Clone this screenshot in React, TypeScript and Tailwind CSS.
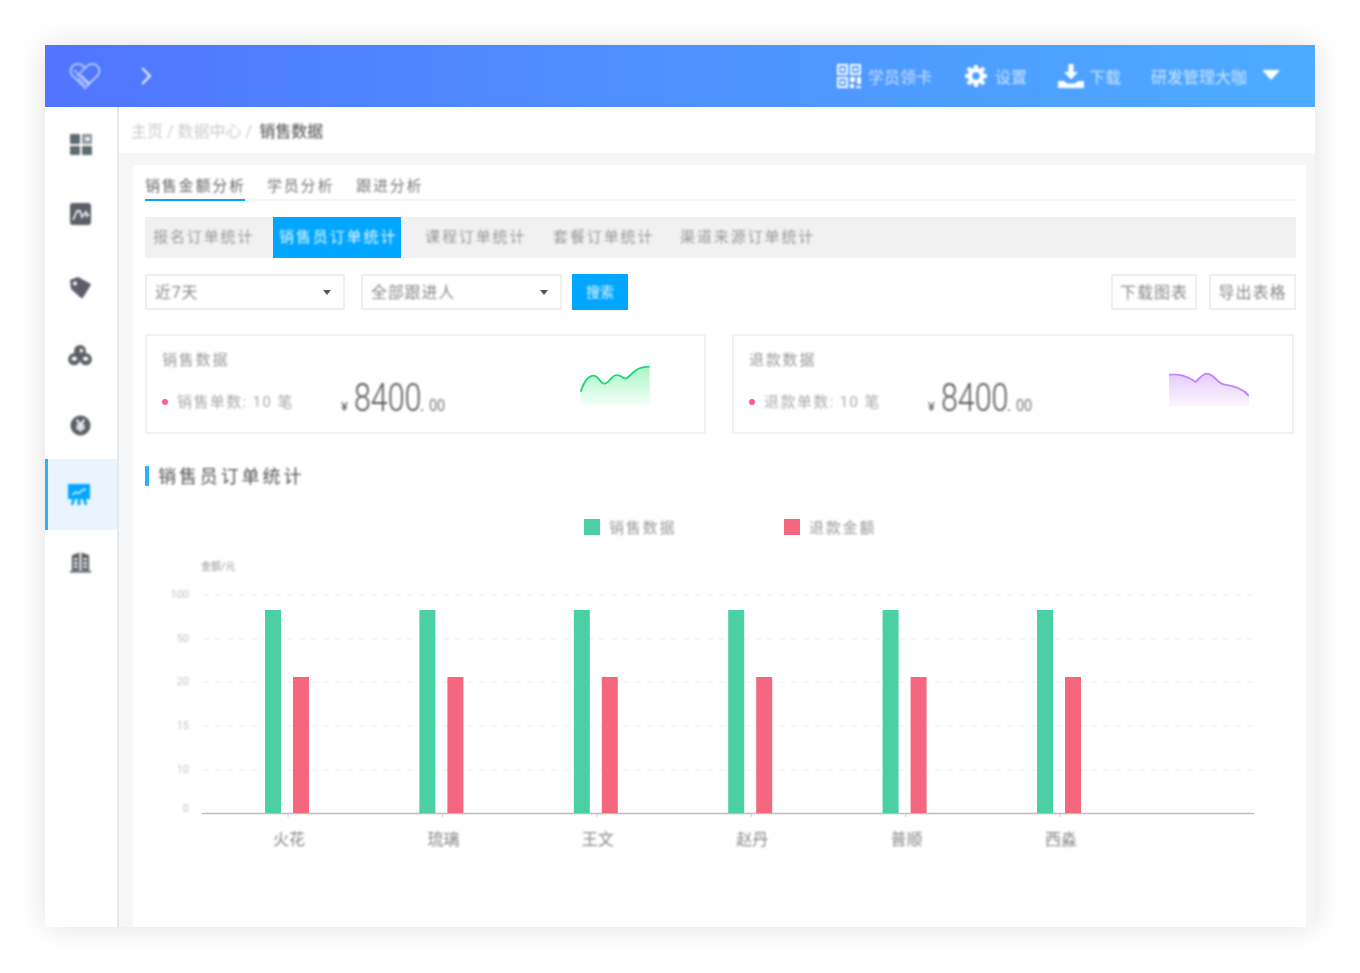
const names = ["火花", "琉璃", "王文", "赵丹", "普顺", "西淼"];
const gridRows = [
  { y: 595, label: "100" },
  { y: 639, label: "50" },
  { y: 682, label: "20" },
  { y: 726, label: "15" },
  { y: 770, label: "10" },
];

// text and icons in the reference are soft, boxes and bars are not
function Soft({ children }: { children: React.ReactNode }) {
  return <span className="inline-block blur-[0.8px]">{children}</span>;
}

function Logo() {
  return (
    <svg width="32" height="28" viewBox="0 0 32 28" fill="none" stroke="#fff" strokeOpacity="0.7" strokeWidth="1.6">
      <path d="M16 26 3 13C-.5 8.500 3 2 8.500 2c3 0 5.500 1.500 7.500 4 2-2.500 4.500-4 7.500-4C29 2 32.500 8.500 29 13Z" />
      <path d="M5 8l14 14M9 16l7 7M12 13l8 8M16 6 8 14" strokeWidth="1.200" />
    </svg>
  );
}

function QrIcon() {
  return (
    <svg width="24" height="24" viewBox="0 0 24 24" fill="#fff">
      <path fillRule="evenodd" d="M0 0h11v11H0Zm2 2v7h7V2Zm1.500 2h4v3h-4ZM13 0h11v11H13Zm2 2v7h7V2Zm1.500 2h4v3h-4ZM0 13h11v11H0Zm2 2v7h7v-7Zm1.500 2h4v3h-4Z" />
      <path d="M13 13h5v5h-5Zm7 0h4v7h-4Zm-7 7h4v4h-4Zm6 2h5v2h-5Z" />
    </svg>
  );
}

function GearIcon() {
  return (
    <svg width="24" height="24" viewBox="0 0 24 24" fill="none" stroke="#fff">
      <circle cx="12" cy="12" r="6" strokeWidth="4.500" />
      <path d="M12 1v4M12 19v4M1 12h4M19 12h4M4 4l3 3M17 17l3 3M20 4l-3 3M7 17l-3 3" strokeWidth="4" />
    </svg>
  );
}

function DownloadIcon() {
  return (
    <svg width="26" height="24" viewBox="0 0 26 24" fill="#fff">
      <path d="M10.500 0h5v8H20l-7 7.500L6 8h4.500Z" />
      <path d="M0 17h6l3 2.500h8l3-2.500h6v7H0Z" />
    </svg>
  );
}

function DashIcon() {
  return (
    <svg className="block" width="22" height="21" viewBox="0 0 22 21">
      <rect width="10" height="10" rx="1" fill="#5f6b73" />
      <rect x="12" width="10" height="10" rx="1" fill="#8e979d" />
      <rect x="15" y="3" width="5" height="4" fill="#e6e8ea" />
      <rect y="12" width="10" height="9" rx="1" fill="#5f6b73" />
      <rect x="12" y="12" width="10" height="9" rx="1" fill="#5f6b73" />
    </svg>
  );
}

function ChartSquareIcon() {
  return (
    <svg className="block" width="21" height="22" viewBox="0 0 21 22">
      <rect width="21" height="22" rx="3" fill="#5a5e66" />
      <path d="M3 17l4-9 3 0 2 6 4-5 1 4 2-2" fill="none" stroke="#f0f0f0" strokeWidth="1.800" />
    </svg>
  );
}

function TagIcon() {
  return (
    <svg className="block" width="22" height="22" viewBox="0 0 22 22" fill="#5a5e66">
      <path fillRule="evenodd" d="M0 3 8 0l12 6.500a1.500 1.500 0 0 1 .5 2L13 20.500a1.500 1.500 0 0 1-2 .5L1 12ZM5 4.500a2 2 0 1 0 .1 0Z" />
    </svg>
  );
}

function CoinsIcon() {
  return (
    <svg className="block" width="24" height="22" viewBox="0 0 24 22" fill="#5a5e66">
      <path fillRule="evenodd" d="M12 0a6 6 0 0 1 5.500 8.300A6 6 0 1 1 12 15.500a6 6 0 1 1-5.500-7.200A6 6 0 0 1 12 0Zm0 3.500v4.500l3.500-1.500a3.800 3.800 0 0 0-3.500-3Zm-5.500 8a3.500 3.500 0 0 0-3 3.500l4 1 2-3Zm11 0-3 1.500 2 3 4-1a3.500 3.500 0 0 0-3-3.500Z" />
    </svg>
  );
}

function YenIcon() {
  return (
    <svg className="block" width="21" height="21" viewBox="0 0 22 22">
      <circle cx="11" cy="11" r="10.500" fill="#5a5e66" />
      <path d="M7 5l4 5 4-5M6.500 11h9M6.500 14h9M11 10v7.500" fill="none" stroke="#f4f4f4" strokeWidth="2.200" />
    </svg>
  );
}

function BoardIcon() {
  return (
    <svg className="block" width="22" height="21" viewBox="0 0 22 21">
      <path d="M0 0h22v15H0Z" fill="#00a6ff" />
      <path d="M4 11l4-3 2 1.500L16 5l2 1" fill="none" stroke="#d8f0ff" strokeWidth="1.500" />
      <path d="M4 15h3l-1.500 6H3ZM9.500 15h3v6h-3ZM15 15h3l1 6h-2.500Z" fill="#00a6ff" />
    </svg>
  );
}

function BuildingIcon() {
  return (
    <svg className="block" width="21" height="21" viewBox="0 0 22 21" fill="#5a5e66">
      <path fillRule="evenodd" d="M2 3 10 0v19H2ZM4 6v2h4V6Zm0 4v2h4v-2Zm0 4v2h4v-2ZM12 0l8 3v16h-8Zm2 6v2h4V6Zm0 4v2h4v-2Zm0 4v2h4v-2Z" />
      <rect y="19" width="22" height="2" />
    </svg>
  );
}

function Caret() {
  return <span className="h-0 w-0 border-x-[4.500px] border-t-[5px] border-x-transparent border-t-[#555]" />;
}

function StatCard({ title, label, children, className }: { title: string; label: string; children: React.ReactNode; className: string }) {
  return (
    <div className={`flex h-[100px] justify-between border-2 border-[#f2f2f3] ${className}`}>
      <div className="pl-[15px] pt-[14px]">
        <div className="text-[15px] leading-[20px] tracking-[1.8px] text-[#999]"><Soft>{title}</Soft></div>
        <div className="mt-[14px] flex h-[36px] items-center">
          <span className="h-[6px] w-[6px] rounded-full bg-[#ff5a9e]" />
          <span className="ml-[9px] w-[164px] whitespace-nowrap text-[15px] leading-[20px] tracking-[1.4px] text-[#aaa]"><Soft>{label}</Soft></span>
          <span className="-mt-[6px] flex items-baseline text-[#555] blur-[0.8px]">
            <span className="w-[13px] text-[13px]">¥</span>
            <span className="inline-block w-[66px] origin-left scale-x-[0.8] text-[38px] leading-[36px] font-light">8400</span>
            <span className="w-[9px] text-[16px]">.</span>
            <span className="inline-block w-[18px] origin-left scale-x-[0.9] text-[16px] text-[#777]">00</span>
          </span>
        </div>
      </div>
      {children}
    </div>
  );
}

export default function App() {
  return (
    <div className="h-[973px] w-[1360px] overflow-hidden bg-white pl-[45px] pt-[45px] font-['Roboto','Noto_Sans_CJK_SC',sans-serif]">
      <div className="flex h-[882px] w-[1270px] flex-col shadow-[0_0_30px_rgba(0,0,0,0.12)]">
        {/* HEADER */}
        <header className="flex h-[62px] shrink-0 items-center bg-gradient-to-r from-[#5075ff] to-[#4dacff] pr-[35px]">
          <div className="ml-[24px] flex items-center blur-[0.8px]">
            <Logo />
            <svg className="ml-[39px]" width="12" height="18" viewBox="0 0 12 18" fill="none" stroke="#fff" strokeOpacity="0.9" strokeWidth="2">
              <path d="M2 1l8 8-8 8" />
            </svg>
          </div>
          <div className="ml-auto flex items-center text-[16px] leading-[24px] text-white/70 blur-[0.8px]">
            <QrIcon />
            <span className="ml-[7px] mt-[3px]">学员领卡</span>
            <span className="ml-[32px]">
              <GearIcon />
            </span>
            <span className="ml-[7px] mt-[3px]">设置</span>
            <span className="ml-[31px]">
              <DownloadIcon />
            </span>
            <span className="ml-[5px] mt-[3px]">下载</span>
            <span className="ml-[30px] mt-[3px]">研发管理大咖</span>
            <svg className="ml-[15px] -mt-[2px]" width="18" height="10" viewBox="0 0 18 10" fill="#fff">
              <path d="M0 0h18L9 10Z" />
            </svg>
          </div>
        </header>

        <div className="flex min-h-0 flex-1">
          {/* SIDEBAR */}
          <aside className="flex w-[74px] shrink-0 flex-col border-r-2 border-[#e8e8e8] bg-white pt-[2px]">
            <div className="flex h-[70px] items-center justify-center pr-[1px]"><Soft><DashIcon /></Soft></div>
            <div className="flex h-[70px] items-center justify-center pr-[1px]"><Soft><ChartSquareIcon /></Soft></div>
            <div className="flex h-[70px] items-center justify-center pr-[1px] pt-[8px]"><Soft><TagIcon /></Soft></div>
            <div className="flex h-[70px] items-center justify-center pr-[3px] pt-[4px]"><Soft><CoinsIcon /></Soft></div>
            <div className="flex h-[70px] items-center justify-center pr-[2px] pt-[3px]"><Soft><YenIcon /></Soft></div>
            <div className="flex h-[71px] items-center justify-center border-l-[3px] border-[#2fb0ff] bg-[#e8f5ff] pr-[7px]"><Soft><BoardIcon /></Soft></div>
            <div className="flex h-[70px] items-center justify-center pb-[6px] pr-[2px]"><Soft><BuildingIcon /></Soft></div>
          </aside>

          {/* MAIN */}
          <main className="flex min-w-0 flex-1 flex-col bg-[#f5f6f8]">
            <div className="flex h-[46px] shrink-0 items-center bg-white pl-[12px] pt-[3px] text-[16px] text-[#ccc]">
              <Soft>主页 / 数据中心 /</Soft>
              <span className="ml-[7px] font-medium text-[#666]"><Soft>销售数据</Soft></span>
            </div>

            <div className="ml-[14px] mr-[9px] mt-[12px] flex-1 bg-white pl-[12px] pr-[10px]">
              {/* TABS */}
              <div className="flex h-[36px] border-b-2 border-[#f3f3f3] text-[15px] tracking-[1.8px] text-[#777]">
                <div className="-mb-[2px] flex h-[36px] w-[100px] items-center whitespace-nowrap border-b-2 border-[#00a6ff] pt-[8px] text-[#666]"><Soft>销售金额分析</Soft></div>
                <div className="ml-[22px] flex h-[34px] items-center pt-[8px]"><Soft>学员分析</Soft></div>
                <div className="ml-[22px] flex h-[34px] items-center pt-[8px]"><Soft>跟进分析</Soft></div>
              </div>

              <div className="mt-[16px] flex h-[41px] bg-[#f1f1f1] text-[15px] leading-[41px] tracking-[1.9px] text-[#999]">
                <div className="ml-[8px] w-[100px] whitespace-nowrap"><Soft>报名订单统计</Soft></div>
                <div className="ml-[20px] w-[128px] whitespace-nowrap bg-[#00a6ff] pl-[6px] text-white/90"><Soft>销售员订单统计</Soft></div>
                <div className="ml-[24px] w-[100px] whitespace-nowrap"><Soft>课程订单统计</Soft></div>
                <div className="ml-[28px] w-[100px] whitespace-nowrap"><Soft>套餐订单统计</Soft></div>
                <div className="ml-[27px] w-[133px] whitespace-nowrap"><Soft>渠道来源订单统计</Soft></div>
              </div>

              {/* FILTERS */}
              <div className="mt-[16px] flex h-[36px] text-[16px] tracking-[0.8px] text-[#888]">
                <div className="flex w-[200px] items-center justify-between border-2 border-[#f0f0f0] pl-[8px] pr-[12px] pt-[1px]">
                  <Soft>近7天</Soft>
                  <Caret />
                </div>
                <div className="ml-[16px] flex w-[201px] items-center justify-between border-2 border-[#f0f0f0] pl-[8px] pr-[12px] pt-[1px]">
                  <Soft>全部跟进人</Soft>
                  <Caret />
                </div>
                <div className="ml-[10px] flex w-[56px] items-center justify-center bg-[#00a6ff] text-[14px] tracking-normal text-white/90"><Soft>搜索</Soft></div>
                <div className="ml-auto flex w-[86px] items-center justify-center border-2 border-[#f0f0f0] pt-[1px] tracking-[1px]"><Soft>下载图表</Soft></div>
                <div className="ml-[12px] flex w-[87px] items-center justify-center border-2 border-[#f0f0f0] pt-[1px] tracking-[1px]"><Soft>导出表格</Soft></div>
              </div>

              {/* STAT CARDS */}
              <div className="mr-[2px] mt-[24px] flex justify-between">
                <StatCard className="w-[561px]" title="销售数据" label="销售单数: 10 笔">
                  <svg className="mr-[54px] mt-[29px]" width="70.400" height="40" viewBox="1176 120 184 120" preserveAspectRatio="none">
                    <defs>
                      <linearGradient id="greenFill" x1="0" y1="0" x2="0" y2="1">
                        <stop offset="0" stopColor="#a8f5c4" />
                        <stop offset="1" stopColor="#f5fff8" />
                      </linearGradient>
                    </defs>
                    <path d="M1178 200C1185 175 1195 152 1212 152C1225 152 1228 176 1240 176C1252 176 1258 150 1272 150C1285 150 1288 162 1297 160C1310 155 1315 125 1358 125V240H1178Z" fill="url(#greenFill)" />
                    <path d="M1178 200C1185 175 1195 152 1212 152C1225 152 1228 176 1240 176C1252 176 1258 150 1272 150C1285 150 1288 162 1297 160C1310 155 1315 125 1358 125" fill="none" stroke="#1fd67a" strokeWidth="5" />
                  </svg>
                </StatCard>
                <StatCard className="w-[562px]" title="退款数据" label="退款单数: 10 笔">
                  <svg className="mr-[43px] mt-[36px]" width="80.400" height="34.300" viewBox="1146 140 210 103" preserveAspectRatio="none">
                    <defs>
                      <linearGradient id="purpleFill" x1="0" y1="0" x2="0" y2="1">
                        <stop offset="0" stopColor="#e6ccff" />
                        <stop offset="1" stopColor="#faf6ff" />
                      </linearGradient>
                    </defs>
                    <path d="M1146 148C1170 146 1190 148 1215 170C1225 160 1235 144 1245 145C1265 146 1272 176 1292 178C1320 182 1340 190 1355 212V243H1146Z" fill="url(#purpleFill)" />
                    <path d="M1146 148C1170 146 1190 148 1215 170C1225 160 1235 144 1245 145C1265 146 1272 176 1292 178C1320 182 1340 190 1355 212" fill="none" stroke="#c084fc" strokeWidth="5" />
                  </svg>
                </StatCard>
              </div>

              {/* CHART TITLE */}
              <div className="mt-[32px] flex h-[20px] items-center border-l-4 border-[#2fb0ff] pl-[9px] text-[18px] tracking-[2.9px] text-[#555]">
                <Soft>销售员订单统计</Soft>
              </div>

              {/* LEGEND */}
              <div className="mt-[33px] flex h-[16px] items-center text-[15px] tracking-[1.8px] text-[#999]">
                <span className="ml-[439px] h-[16px] w-[16px] bg-[#4bcfa5]" />
                <span className="ml-[9px] w-[66px] whitespace-nowrap pt-[3px]"><Soft>销售数据</Soft></span>
                <span className="ml-[109px] h-[16px] w-[16px] bg-[#f4677f]" />
                <span className="ml-[9px] w-[66px] whitespace-nowrap pt-[3px]"><Soft>退款金额</Soft></span>
              </div>

              {/* CHART */}
              <svg className="mt-[14px] block" width="1151" height="310" viewBox="145 549 1151 310">
                <text className="blur-[0.8px]" x="201" y="570" fontSize="10" fill="#999">金额/元</text>
                {gridRows.map((r) => (
                  <g key={r.y}>
                    <line x1="203" x2="1254" y1={r.y} y2={r.y} stroke="#efefef" strokeDasharray="6 6" />
                    <text className="blur-[0.8px]" x="189" y={r.y + 3} fontSize="11" textAnchor="end" fill="#c4c4c4">{r.label}</text>
                  </g>
                ))}
                <text className="blur-[0.8px]" x="189" y="812" fontSize="11" textAnchor="end" fill="#c4c4c4">0</text>
                <line x1="202" x2="1254" y1="813.500" y2="813.500" stroke="#bdbdbd" strokeWidth="1.500" />
                {names.map((name, i) => {
                  const x = 265 + i * 154.4;
                  return (
                    <g key={name}>
                      <rect x={x} y="610" width="16" height="203" fill="#4bcfa5" />
                      <rect x={x + 28} y="677" width="16" height="136" fill="#f4677f" />
                      <line x1={x + 23} x2={x + 23} y1="814" y2="817" stroke="#ccc" />
                      <text className="blur-[0.8px]" x={x + 24} y="845" fontSize="16" textAnchor="middle" fill="#888">{name}</text>
                    </g>
                  );
                })}
              </svg>
            </div>
          </main>
        </div>
      </div>
    </div>
  );
}
